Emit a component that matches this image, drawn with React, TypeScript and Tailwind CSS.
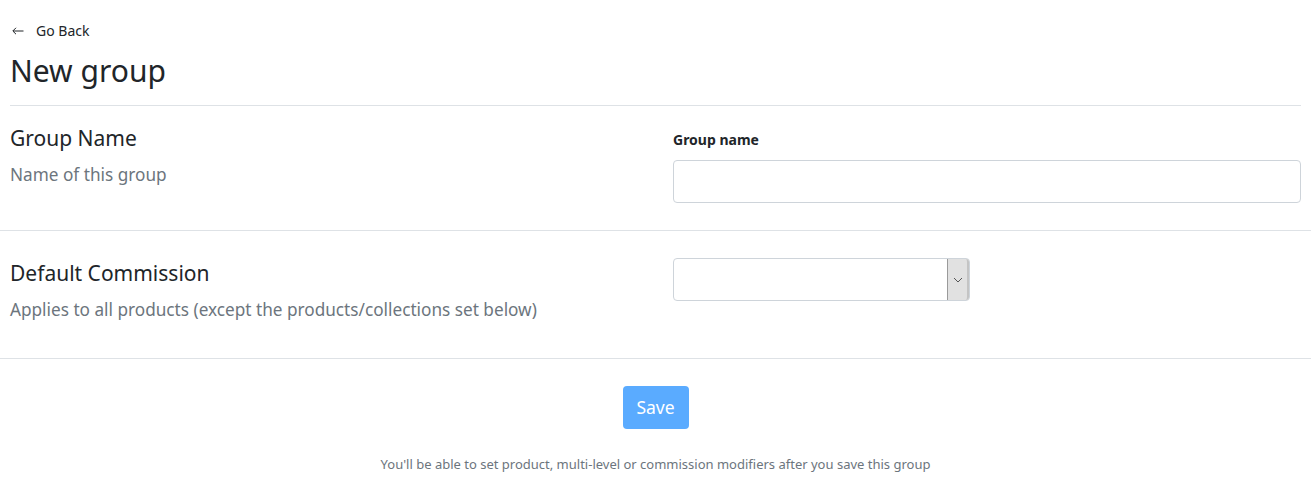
const font = { fontFamily: '"Noto Sans", "Open Sans", sans-serif' };

function SectionRow({
  title,
  description,
  top,
  children,
}: {
  title: string;
  description: string;
  top: string;
  children: React.ReactNode;
}) {
  return (
    <div className={`flex items-start border-b border-[#dee2e6] px-[10px] pb-[27px] ${top}`}>
      <div className="w-[663px] shrink-0">
        <h2 className="text-[21px] leading-[30px] text-[#212529]">{title}</h2>
        <p className="mt-[9px] mb-[8px] text-[17.2px] leading-[26px] text-[#6c757d]">{description}</p>
      </div>
      <div className="flex-1">{children}</div>
    </div>
  );
}

export default function App() {
  return (
    <div className="min-h-screen bg-white" style={font}>
      {/* Header */}
      <div className="px-[10px] pt-[21px]">
        <a href="#" className="flex items-center gap-[12px] text-[14px] leading-[20px] text-[#212529]">
          <svg width="12" height="8" viewBox="0 0 12 8" className="ml-[2px]">
            <path d="M11.5 4H1M4 0.8L0.8 4L4 7.2" fill="none" stroke="#212529" strokeWidth="1" />
          </svg>
          <span>Go Back</span>
        </a>
        <h1 className="mt-[10px] text-[30px] leading-[40px] text-[#212529]">New group</h1>
        <div className="mt-[14px] border-b border-[#dee2e6]" />
      </div>

      {/* Group name */}
      <SectionRow title="Group Name" description="Name of this group" top="pt-[17px]">
        <label className="mt-[8px] block text-[14px] font-bold leading-[18px] text-[#212529]">
          Group name
        </label>
        <input
          type="text"
          className="mt-[11px] block h-[43px] w-full rounded-[4px] border border-[#ced4da] bg-white px-3 outline-none"
        />
      </SectionRow>

      {/* Default commission */}
      <SectionRow
        title="Default Commission"
        description="Applies to all products (except the products/collections set below)"
        top="pt-[27px]"
      >
        <div className="flex h-[43px] w-[297px] rounded-[4px] border border-[#ced4da] bg-white">
          <div className="flex-1" />
          <div className="flex w-[22px] items-center justify-center rounded-r-[3px] border-l border-l-[#9a9a9a] border-r-2 border-r-[#c4c4c4] bg-[#e1e1e1]">
            <svg width="10" height="6" viewBox="0 0 10 6">
              <path d="M1 1L5 5L9 1" fill="none" stroke="#555" strokeWidth="1" />
            </svg>
          </div>
        </div>
      </SectionRow>

      {/* Footer */}
      <div className="flex flex-col items-center pt-[27px]">
        <button className="h-[43px] w-[66px] rounded-[4px] bg-[#5aabff] text-[17.5px] text-white">
          Save
        </button>
        <p className="mt-[25px] text-[13px] leading-[20px] text-[#6c757d]">
          You'll be able to set product, multi-level or commission modifiers after you save this group
        </p>
      </div>
    </div>
  );
}
